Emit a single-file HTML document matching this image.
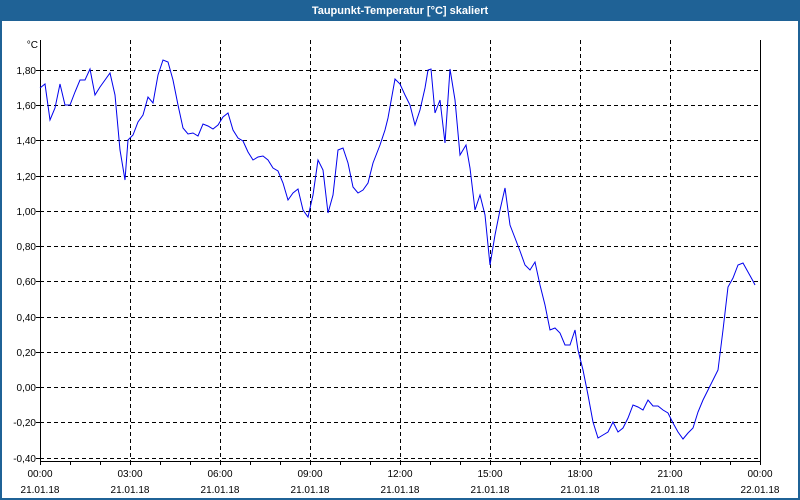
<!DOCTYPE html><html><head><style>
body{margin:0;width:800px;height:500px;overflow:hidden;background:#fff;font-family:"Liberation Sans",sans-serif}
</style></head><body>
<svg width="800" height="500" xmlns="http://www.w3.org/2000/svg" style="display:block">
<rect x="0" y="0" width="800" height="500" fill="#1f6296"/>
<rect x="2" y="21" width="796" height="477" fill="#fff"/>
<text x="400" y="14" fill="#fff" font-size="11" font-weight="bold" text-anchor="middle" font-family="Liberation Sans,sans-serif">Taupunkt-Temperatur [°C] skaliert</text>
<g stroke="#000" stroke-width="1" stroke-dasharray="4,3" fill="none">
<path d="M40 70.5H760M40 105.5H760M40 140.5H760M40 176.5H760M40 211.5H760M40 246.5H760M40 281.5H760M40 317.5H760M40 352.5H760M40 387.5H760M40 422.5H760M40 458.5H760"/>
<path d="M130.5 40V461M220.5 40V461M310.5 40V461M400.5 40V461M490.5 40V461M580.5 40V461M670.5 40V461"/>
</g>
<g stroke="#000" stroke-width="1" fill="none">
<path d="M40.5 40V465M40 461.5H761M760.5 40V465"/>
<path d="M70.5 461v4M100.5 461v4M130.5 461v4M160.5 461v4M190.5 461v4M220.5 461v4M250.5 461v4M280.5 461v4M310.5 461v4M340.5 461v4M370.5 461v4M400.5 461v4M430.5 461v4M460.5 461v4M490.5 461v4M520.5 461v4M550.5 461v4M580.5 461v4M610.5 461v4M640.5 461v4M670.5 461v4M700.5 461v4M730.5 461v4"/>
<path d="M36 70.5h4M36 105.5h4M36 140.5h4M36 176.5h4M36 211.5h4M36 246.5h4M36 281.5h4M36 317.5h4M36 352.5h4M36 387.5h4M36 422.5h4M36 458.5h4"/>
</g>
<g font-size="10" fill="#000" text-anchor="end" font-family="Liberation Sans,sans-serif">
<text x="38" y="48">°C</text>
<text x="36" y="74">1,80</text><text x="36" y="109">1,60</text><text x="36" y="144">1,40</text><text x="36" y="180">1,20</text><text x="36" y="215">1,00</text><text x="36" y="250">0,80</text><text x="36" y="285">0,60</text><text x="36" y="321">0,40</text><text x="36" y="356">0,20</text><text x="36" y="391">0,00</text><text x="36" y="426">-0,20</text><text x="36" y="462">-0,40</text>
</g>
<g font-size="10" fill="#000" text-anchor="middle" font-family="Liberation Sans,sans-serif">
<text x="40" y="477">00:00</text><text x="130" y="477">03:00</text><text x="220" y="477">06:00</text><text x="310" y="477">09:00</text><text x="400" y="477">12:00</text><text x="490" y="477">15:00</text><text x="580" y="477">18:00</text><text x="670" y="477">21:00</text><text x="760" y="477">00:00</text>
<text x="40" y="493">21.01.18</text><text x="130" y="493">21.01.18</text><text x="220" y="493">21.01.18</text><text x="310" y="493">21.01.18</text><text x="400" y="493">21.01.18</text><text x="490" y="493">21.01.18</text><text x="580" y="493">21.01.18</text><text x="670" y="493">21.01.18</text><text x="760" y="493">22.01.18</text>
</g>
<polyline fill="none" stroke="#0000ee" stroke-width="1" points="40,88 45,84 50,120 55,108 60,84 65,105 70,105 75,92 80,80 85,80 90,69 95,95 100,87 105,80 110,73 115,95 120,150 125,180 128,140 133,135 138,122 143,115 148,97 153,103 158,75 163,60 168,62 173,80 178,105 183,128 188,134 193,133 198,136 203,124 208,126 213,129 218,125 223,117 228,113 233,130 238,138 243,141 248,152 253,160 258,157 263,156 268,160 273,168 278,171 283,183 288,200 293,193 298,189 303,210 308,217 313,195 318,160 323,170 328,213 333,195 338,150 343,148 348,163 353,187 358,193 363,190 368,183 373,163 380,145 385,130 388,118 395,79 400,84 405,95 410,105 415,125 420,110 425,88 428,70 431,69 435,113 440,100 445,143 450,69 455,100 460,155 466,145 470,168 475,210 480,195 485,215 490,265 495,235 500,210 505,188 510,225 515,238 520,251 525,265 530,270 535,262 540,285 545,305 550,330 555,328 560,333 565,345 570,345 575,330 578,350 583,370 588,395 593,422 598,438 603,435 608,432 613,422 618,432 623,428 628,418 633,405 638,407 643,410 648,400 653,406 658,406 663,410 668,413 673,423 678,432 683,439 688,433 693,428 698,412 703,400 708,390 713,380 718,370 723,330 728,287 733,278 738,265 743,263 748,272 753,281 755,285"/>
</svg>
</body></html>
